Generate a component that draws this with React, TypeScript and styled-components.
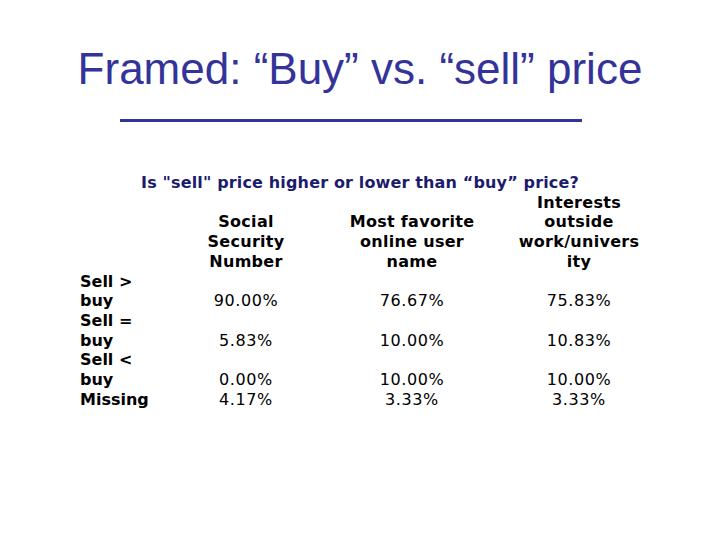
import styled, { createGlobalStyle } from 'styled-components'

const GlobalStyle = createGlobalStyle`
  html, body {
    margin: 0;
    padding: 0;
    background: #ffffff;
  }
`

const Slide = styled.div`
  width: 720px;
  height: 540px;
  background: #ffffff;
  overflow: hidden;
`

const Title = styled.h1`
  margin: 0;
  padding-top: 47px;
  font-family: "Liberation Sans", Arial, sans-serif;
  font-weight: 400;
  font-size: 44px;
  line-height: 44px;
  color: #333399;
  text-align: center;
`

const Rule = styled.div`
  width: 462px;
  height: 3px;
  margin: 28px 0 0 120px;
  background: #333399;
`

const Question = styled.div`
  margin-top: 51px;
  font-family: "DejaVu Sans", Verdana, sans-serif;
  font-weight: 700;
  font-size: 16px;
  letter-spacing: 0.15px;
  line-height: 19.7px;
  color: #1c1c6c;
  text-align: center;
`

const Table = styled.div`
  display: grid;
  grid-template-columns: 92px 148px 184px 150px;
  margin-left: 80px;
  font-family: "DejaVu Sans", Verdana, sans-serif;
  font-size: 16px;
  line-height: 19.7px;
  color: #000000;
`

const HeadCell = styled.div`
  font-weight: 700;
  letter-spacing: 0.3px;
  text-align: center;
  align-self: end;
`

const Label = styled.div`
  font-weight: 700;
  text-align: left;
`

const Value = styled.div`
  letter-spacing: 0.6px;
  text-align: center;
  align-self: end;
`

const headers = [
  ['Social', 'Security', 'Number'],
  ['Most favorite', 'online user', 'name'],
  ['Interests', 'outside', 'work/univers', 'ity'],
]

const rows = [
  { label: ['Sell >', 'buy'], values: ['90.00%', '76.67%', '75.83%'] },
  { label: ['Sell =', 'buy'], values: ['5.83%', '10.00%', '10.83%'] },
  { label: ['Sell <', 'buy'], values: ['0.00%', '10.00%', '10.00%'] },
  { label: ['Missing'], values: ['4.17%', '3.33%', '3.33%'] },
]

const Lines = ({ lines }: { lines: string[] }) => (
  <>
    {lines.map((l, i) => (
      <span key={i}>
        {l}
        {i < lines.length - 1 && <br />}
      </span>
    ))}
  </>
)

const App = () => {
  return (
    <>
      <GlobalStyle />
      <Slide>
        <Title>Framed: “Buy” vs. “sell” price</Title>
        <Rule />
        <Question>Is "sell" price higher or lower than “buy” price?</Question>
        <Table>
          <div />
          {headers.map((h, i) => (
            <HeadCell key={i}>
              <Lines lines={h} />
            </HeadCell>
          ))}
          {rows.map((r, i) => [
            <Label key={`l${i}`}>
              <Lines lines={r.label} />
            </Label>,
            ...r.values.map((v, j) => <Value key={`v${i}-${j}`}>{v}</Value>),
          ])}
        </Table>
      </Slide>
    </>
  )
}

export default App
